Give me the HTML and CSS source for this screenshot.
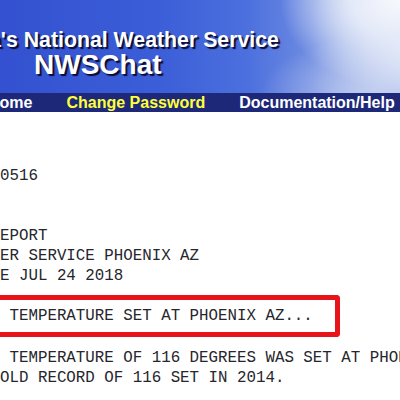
FILE: index.html
```html
<!DOCTYPE html>
<html lang="en">
<head>
  <meta charset="UTF-8">
  <meta name="viewport" content="width=device-width, initial-scale=1.0">
  <title>NWSChat</title>
  <link rel="stylesheet" href="styles.css">
</head>
<body>
  <div class="banner">
    <div class="agency">a's National Weather Service</div>
    <div class="product">NWSChat</div>
  </div>
  <div class="menu">
    <a class="menu-link first" href="#">Home</a>
    <a class="menu-link current" href="#">Change Password</a>
    <a class="menu-link" href="#">Documentation/Help</a>
  </div>

  <div class="bulletin">
<pre class="text">0516


EPORT
ER SERVICE PHOENIX AZ
E JUL 24 2018</pre>
    <!-- highlighted headline -->
    <div class="highlight">
<pre class="text"> TEMPERATURE SET AT PHOENIX AZ...</pre>
    </div>
<pre class="text after"> TEMPERATURE OF 116 DEGREES WAS SET AT PHOENIX AZ TODAY.
OLD RECORD OF 116 SET IN 2014.</pre>
  </div>
</body>
</html>
```

FILE: styles.css
```css
body {
  margin: 0;
  padding: 0;
  background-color: #fff;
  font-family: 'Liberation Sans', Arial, sans-serif;
  overflow: hidden;
}

.banner {
  height: 93px;
  box-sizing: border-box;
  padding-top: 30px;
  background:
    radial-gradient(ellipse 120px 90px at 100% 0%, #f8f9fd 0%, #e4eaf8 40%, rgba(210, 220, 245, 0) 100%),
    radial-gradient(ellipse 140px 60px at 100% 100%, #c2cef0 0%, rgba(180, 196, 238, 0) 100%),
    linear-gradient(90deg, #3351d0 0%, #3c5ed8 40%, #4c70de 62%, #6f8ce1 78%, #a9bbeb 90%, #dfe6f7 100%);
}

.agency,
.product {
  color: #fff;
  font-weight: bold;
  text-shadow: 2px 2px 1px #0a0d33;
  white-space: nowrap;
}

.agency {
  font-size: 21.3px;
  line-height: 21px;
  margin-left: -11px;
}

.product {
  font-size: 28px;
  line-height: 28px;
  margin-left: 34px;
}

.menu {
  display: flex;
  gap: 34px;
  height: 19px;
  background-color: #1e2878;
  white-space: nowrap;
}

.menu-link {
  color: #fff;
  font-size: 16px;
  font-weight: bold;
  line-height: 19px;
  text-decoration: none;
}

.menu-link.first {
  margin-left: -12px;
}

.menu-link.current {
  color: #ffff3c;
}

.bulletin {
  padding-top: 54px;
}

.text {
  margin: 0;
  font-family: 'Liberation Mono', 'DejaVu Sans Mono', monospace;
  font-size: 15.8px;
  line-height: 20px;
  color: #26262c;
  white-space: pre;
}

.highlight {
  width: 335px;
  margin-top: 9px;
  padding: 6px 0;
  border: 5px solid #e8141c;
  border-left: none;
  border-radius: 0 4px 4px 0;
}

.after {
  margin-top: 11px;
}
```
